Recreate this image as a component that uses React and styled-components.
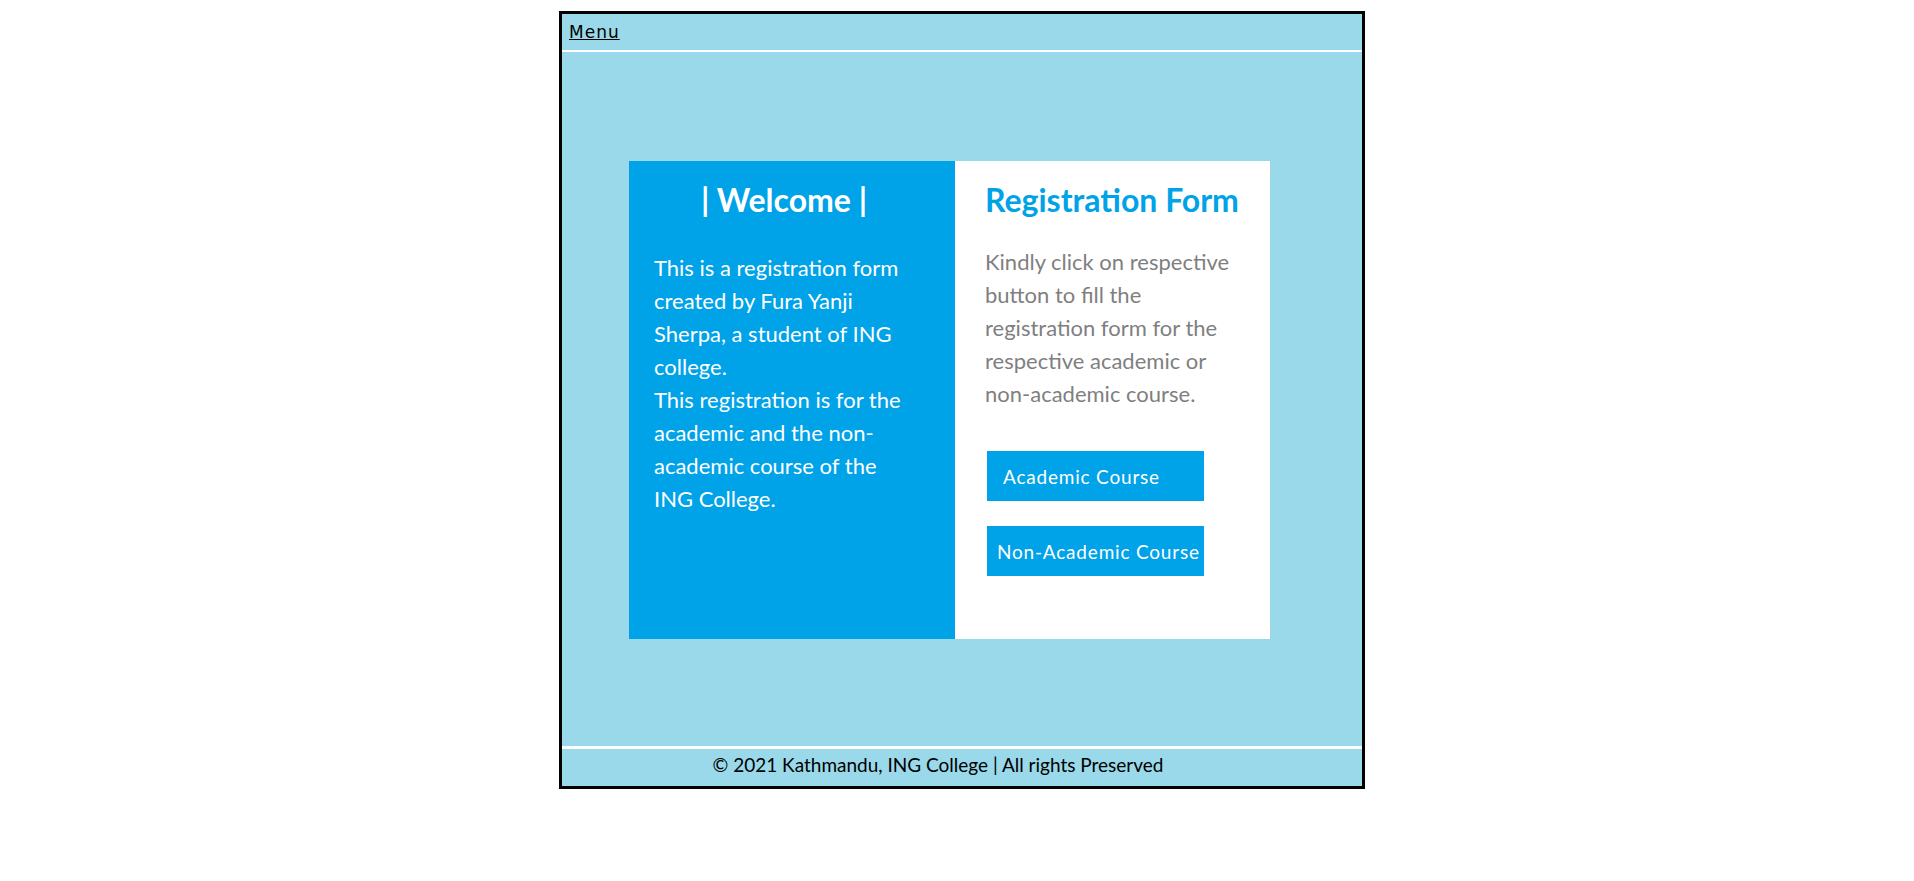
import styled, { createGlobalStyle } from 'styled-components'

const GlobalStyle = createGlobalStyle`
  body {
    margin: 0;
    background: #ffffff;
    font-family: Lato, "Liberation Sans", sans-serif;
  }
`

const Frame = styled.div`
  box-sizing: border-box;
  width: 806px;
  height: 778px;
  margin: 11px 0 0 559px;
  border: 3px solid #000;
  background: #99d9ea;
  display: flex;
  flex-direction: column;
`

const Header = styled.nav`
  height: 36px;
  border-bottom: 2px solid #fff;
  padding-left: 7px;
  line-height: 36px;
`

const MenuLink = styled.a`
  font-family: "DejaVu Sans", sans-serif;
  font-size: 17px;
  letter-spacing: 1px;
  color: #000;
  text-decoration: underline;
`

const Main = styled.main`
  flex: 1;
  padding: 109px 0 0 67px;
`

const Card = styled.section`
  display: flex;
  width: 641px;
  height: 478px;
`

const Panel = styled.div`
  box-sizing: border-box;
  width: ${(p) => p.$width}px;
  padding: 21px ${(p) => p.$right}px 0 ${(p) => p.$left}px;
  background: ${(p) => (p.$blue ? '#00a2e8' : '#fff')};
  color: ${(p) => (p.$blue ? '#fff' : '#7f7f7f')};
`

const Title = styled.h2`
  margin: 0;
  font-size: 32px;
  line-height: 36px;
  font-weight: 700;
  white-space: nowrap;
  text-align: ${(p) => (p.$center ? 'center' : 'left')};
  color: ${(p) => (p.$center ? '#fff' : '#00a2e8')};
`

const Text = styled.p`
  margin: ${(p) => p.$top}px 0 0;
  font-size: 22px;
  line-height: 33px;
`

const Buttons = styled.div`
  display: flex;
  flex-direction: column;
  align-items: flex-start;
  gap: 25px;
  margin-top: 41px;
  padding-left: 2px;
`

const CourseButton = styled.button`
  box-sizing: border-box;
  width: 217px;
  height: 50px;
  padding: 0 0 0 ${(p) => p.$pad}px;
  border: none;
  background: #00a2e8;
  color: #fff;
  font-family: Lato, "Liberation Sans", sans-serif;
  font-size: 19px;
  letter-spacing: 0.8px;
  text-align: left;
  white-space: nowrap;
  overflow: hidden;
  cursor: pointer;
`

const Footer = styled.footer`
  height: 37px;
  border-top: 3px solid #fff;
  padding-right: 48px;
  text-align: center;
  font-size: 19px;
  line-height: 31px;
  color: #000;
`

export default function App() {
  return (
    <>
      <GlobalStyle />
      <Frame>
        <Header>
          <MenuLink href="#">Menu</MenuLink>
        </Header>
        <Main>
          <Card>
            <Panel $blue $width={326} $left={25} $right={41}>
              <Title $center>| Welcome |</Title>
              <Text $top={33}>
                This is a registration form created by Fura Yanji Sherpa, a
                student of ING college.
                <br />
                This registration is for the academic and the non-academic
                course of the ING College.
              </Text>
            </Panel>
            <Panel $width={315} $left={30} $right={35}>
              <Title>Registration Form</Title>
              <Text $top={27}>
                Kindly click on respective button to fill the registration
                form for the respective academic or non-academic course.
              </Text>
              <Buttons>
                <CourseButton $pad={16}>Academic Course</CourseButton>
                <CourseButton $pad={10}>Non-Academic Course</CourseButton>
              </Buttons>
            </Panel>
          </Card>
        </Main>
        <Footer>© 2021 Kathmandu, ING College | All rights Preserved</Footer>
      </Frame>
    </>
  )
}
